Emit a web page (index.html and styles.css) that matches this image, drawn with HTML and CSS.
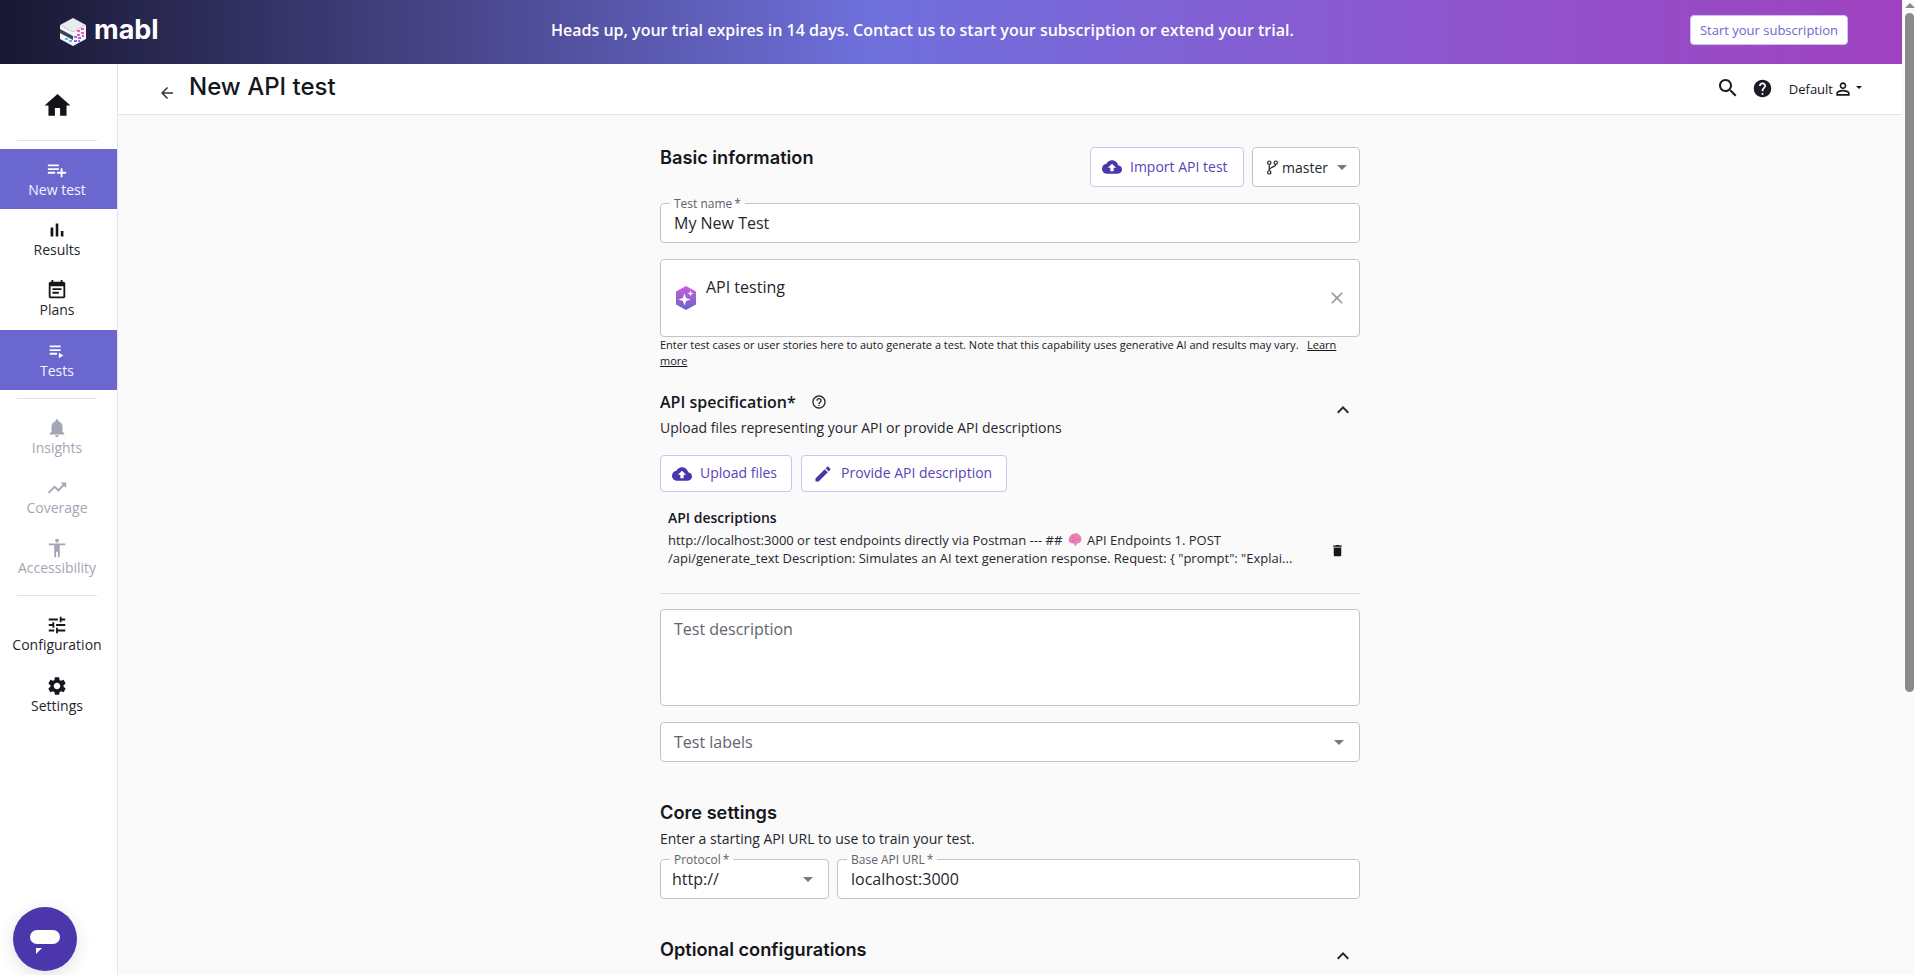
FILE: index.html
```html
<!DOCTYPE html>
<html lang="en">
<head>
  <meta charset="UTF-8" />
  <meta name="viewport" content="width=device-width, initial-scale=1.0"/>
  <title>New API test - mabl</title>
  <link rel="stylesheet" href="styles.css">
</head>
<body>

  <!-- material icons used more than once -->
  <svg class="sprite" aria-hidden="true">
    <symbol id="i-upload" viewBox="0 0 24 24"><path d="M19.35 10.04C18.67 6.59 15.64 4 12 4 9.11 4 6.6 5.64 5.35 8.04 2.34 8.36 0 10.91 0 14c0 3.31 2.69 6 6 6h13c2.76 0 5-2.24 5-5 0-2.64-2.05-4.78-4.65-4.96zM14 13v4h-4v-4H7l5-5 5 5h-3z"/></symbol>
    <symbol id="i-less" viewBox="0 0 24 24"><path d="M12 8l-6 6 1.41 1.41L12 10.83l4.59 4.58L18 14z"/></symbol>
  </svg>

  <div class="app">
    <div class="window">
      <div class="banner">
        <div class="logo">
          <svg class="cube" viewBox="0 0 26 28">
            <path fill="#e9ebef" d="M13 0l13 7-13 7L0 7z"/>
            <path fill="#f6f6f8" d="M0 7l13 7v14L0 21z"/>
            <path fill="#f6f6f8" d="M26 7l-13 7v14l13-7z"/>
            <path fill="#3d4259" d="M0 11l13 7v4L0 15z"/>
            <path fill="#f25bb5" d="M21 10h3v2h-3zM17 12h3v2h-3zM21 14h3v2h-3zM17 16h3v2h-3z"/>
            <path fill="#b45ce8" d="M14 18h3v2h-3zM18 19h3v2h-3zM22 17h2v2h-2z"/>
            <path fill="#6f7bf0" d="M14 22h3v2h-3zM18 22h2v2h-2z"/>
            <path fill="#4cc3e8" d="M5 20h3v2H5zM9 22h3v2H9z"/>
          </svg>
          <span class="wordmark">mabl</span>
        </div>
        <p class="banner-text">Heads up, your trial expires in 14 days. Contact us to start your subscription or extend your trial.</p>
        <a class="start-btn">Start your subscription</a>
      </div>

      <div class="workspace">
        <nav class="sidebar">
          <a class="home">
            <svg viewBox="0 0 24 24"><path d="M10 20v-6h4v6h5v-8h3L12 3 2 12h3v8z"/></svg>
          </a>
          <hr class="side-rule rule-top">
          <a class="nav-item active">
            <svg viewBox="0 0 24 24"><path d="M14 10H2v2h12v-2zm0-4H2v2h12V6zm4 8v-4h-2v4h-4v2h4v4h2v-4h4v-2h-4zM2 16h8v-2H2v2z"/></svg>
            <span>New test</span>
          </a>
          <a class="nav-item">
            <svg viewBox="0 0 24 24"><path d="M5 9.2h3V19H5zM10.6 5h2.8v14h-2.8zm5.6 8H19v6h-2.8z"/></svg>
            <span>Results</span>
          </a>
          <a class="nav-item">
            <svg viewBox="0 0 24 24"><path d="M17 10H7v2h10v-2zm2-7h-1V1h-2v2H8V1H6v2H5c-1.11 0-1.99.9-1.99 2L3 19c0 1.1.89 2 2 2h14c1.1 0 2-.9 2-2V5c0-1.1-.9-2-2-2zm0 16H5V8h14v11zm-5-5H7v2h7v-2z"/></svg>
            <span>Plans</span>
          </a>
          <a class="nav-item active tests-item">
            <svg viewBox="0 0 24 24"><path d="M4 10h12v2H4zm0-4h12v2H4zm0 8h8v2H4zm10 0v6l5-3z"/></svg>
            <span>Tests</span>
          </a>
          <hr class="side-rule">
          <a class="nav-item muted">
            <svg viewBox="0 0 24 24"><path d="M12 22c1.1 0 2-.9 2-2h-4c0 1.1.9 2 2 2zm6-6v-5c0-3.07-1.63-5.64-4.5-6.32V4c0-.83-.67-1.5-1.5-1.5s-1.5.67-1.5 1.5v.68C7.64 5.36 6 7.92 6 11v5l-2 2v1h16v-1l-2-2z"/></svg>
            <span>Insights</span>
          </a>
          <a class="nav-item muted">
            <svg viewBox="0 0 24 24"><path d="M16 6l2.29 2.29-4.88 4.88-4-4L2 16.59 3.41 18l6-6 4 4 6.3-6.29L22 12V6z"/></svg>
            <span>Coverage</span>
          </a>
          <a class="nav-item muted">
            <svg viewBox="0 0 24 24"><path d="M12 2c1.1 0 2 .9 2 2s-.9 2-2 2-2-.9-2-2 .9-2 2-2zm9 7h-6v13h-2v-6h-2v6H9V9H3V7h18v2z"/></svg>
            <span>Accessibility</span>
          </a>
          <hr class="side-rule">
          <a class="nav-item">
            <svg viewBox="0 0 24 24"><path d="M3 17v2h6v-2H3zM3 5v2h10V5H3zm10 16v-2h8v-2h-8v-2h-2v6h2zM7 9v2H3v2h4v2h2V9H7zm14 4v-2H11v2h10zm-6-4h2V7h4V5h-4V3h-2v6z"/></svg>
            <span>Configuration</span>
          </a>
          <a class="nav-item settings-item">
            <svg viewBox="0 0 24 24"><path d="M19.14 12.94c.04-.3.06-.61.06-.94 0-.32-.02-.64-.07-.94l2.03-1.58c.18-.14.23-.41.12-.61l-1.92-3.32c-.12-.22-.37-.29-.59-.22l-2.39.96c-.5-.38-1.03-.7-1.62-.94l-.36-2.54c-.04-.24-.24-.41-.48-.41h-3.84c-.24 0-.43.17-.47.41l-.36 2.54c-.59.24-1.13.57-1.62.94l-2.39-.96c-.22-.08-.47 0-.59.22L2.74 8.87c-.12.21-.08.47.12.61l2.03 1.58c-.05.3-.09.63-.09.94s.02.64.07.94l-2.03 1.58c-.18.14-.23.41-.12.61l1.92 3.32c.12.22.37.29.59.22l2.39-.96c.5.38 1.03.7 1.62.94l.36 2.54c.05.24.24.41.48.41h3.84c.24 0 .44-.17.47-.41l.36-2.54c.59-.24 1.13-.56 1.62-.94l2.39.96c.22.08.47 0 .59-.22l1.92-3.32c.12-.22.07-.47-.12-.61l-2.01-1.58zM12 15.6c-1.98 0-3.6-1.62-3.6-3.6s1.62-3.6 3.6-3.6 3.6 1.62 3.6 3.6-1.62 3.6-3.6 3.6z"/></svg>
            <span>Settings</span>
          </a>
        </nav>

        <main class="main">
          <header class="topbar">
            <svg class="back" viewBox="0 0 24 24"><path d="M20 11H7.83l5.59-5.59L12 4l-8 8 8 8 1.41-1.41L7.83 13H20v-2z"/></svg>
            <h1>New API test</h1>
            <div class="topbar-right">
              <svg class="search" viewBox="0 0 24 24"><path d="M15.5 14h-.79l-.28-.27C15.41 12.59 16 11.11 16 9.5 16 5.91 13.09 3 9.5 3S3 5.91 3 9.5 5.91 16 9.5 16c1.61 0 3.09-.59 4.23-1.57l.27.28v.79l5 4.99L20.49 19l-4.99-5zm-6 0C7.01 14 5 11.99 5 9.5S7.01 5 9.5 5 14 7.01 14 9.5 11.99 14 9.5 14z"/></svg>
              <svg class="help" viewBox="0 0 24 24"><path d="M12 2C6.48 2 2 6.48 2 12s4.48 10 10 10 10-4.48 10-10S17.52 2 12 2zm1 17h-2v-2h2v2zm2.07-7.75l-.9.92C13.45 12.9 13 13.5 13 15h-2v-.5c0-1.1.45-2.1 1.17-2.83l1.24-1.26c.37-.36.59-.86.59-1.41 0-1.1-.9-2-2-2s-2 .9-2 2H8c0-2.21 1.79-4 4-4s4 1.79 4 4c0 .88-.36 1.68-.93 2.25z"/></svg>
              <div class="workspace-menu">
                <span>Default</span>
                <svg class="person" viewBox="0 0 24 24"><path d="M12 5.9c1.16 0 2.1.94 2.1 2.1s-.94 2.1-2.1 2.1S9.9 9.16 9.9 8s.94-2.1 2.1-2.1m0 9c2.97 0 6.1 1.46 6.1 2.1v1.1H5.9V17c0-.64 3.13-2.1 6.1-2.1M12 4C9.79 4 8 5.79 8 8s1.79 4 4 4 4-1.79 4-4-1.79-4-4-4zm0 9c-2.67 0-8 1.34-8 4v3h16v-3c0-2.66-5.33-4-8-4z"/></svg>
                <i class="caret small"></i>
              </div>
            </div>
          </header>

          <form class="form">
            <div class="title-row">
              <h2>Basic information</h2>
              <div class="title-actions">
                <button type="button" class="btn import-btn"><svg><use href="#i-upload"/></svg>Import API test</button>
                <button type="button" class="branch-btn">
                  <svg viewBox="0 0 16 20" fill="none" stroke="currentColor" stroke-width="1.5"><circle cx="4" cy="4" r="2"/><circle cx="4" cy="16" r="2"/><circle cx="12" cy="4" r="2"/><path d="M4 6v8M12 6c0 4-8 3-8 7"/></svg>
                  master<i class="caret"></i>
                </button>
              </div>
            </div>

            <div class="field name-field">
              <label>Test name&#8201;*</label>
              <input type="text" value="My New Test">
            </div>

            <div class="ai-box">
              <svg class="ai-icon" viewBox="0 0 22 24">
                <defs><linearGradient id="aiGrad" x1="0" y1="0" x2="0" y2="1"><stop offset="0" stop-color="#c95fd8"/><stop offset="1" stop-color="#6d62cf"/></linearGradient></defs>
                <path fill="url(#aiGrad)" d="M11 0l10 5.5v13L11 24 1 18.500v-13z"/>
                <path fill="#fff" d="M9.500 7.500l1.600 4.400 4.400 1.600-4.400 1.600-1.600 4.400-1.600-4.400-4.400-1.600 4.400-1.600zM15.500 4.500l.8 2.200 2.200.8-2.200.8-.8 2.200-.8-2.200-2.200-.8 2.200-.8z"/>
              </svg>
              <span class="ai-text">API testing</span>
              <svg class="ai-close" viewBox="0 0 24 24"><path d="M19 6.410L17.590 5 12 10.590 6.410 5 5 6.410 10.590 12 5 17.590 6.410 19 12 13.410 17.590 19 19 17.590 13.410 12z"/></svg>
            </div>
            <p class="hint">Enter test cases or user stories here to auto generate a test. Note that this capability uses generative AI and results may vary. &nbsp; <a>Learn</a> <a>more</a></p>

            <div class="spec-head">
              <div>
                <h3>API specification* <svg class="spec-help" viewBox="0 0 24 24"><path d="M11 18h2v-2h-2v2zm1-16C6.480 2 2 6.480 2 12s4.480 10 10 10 10-4.480 10-10S17.520 2 12 2zm0 18c-4.410 0-8-3.590-8-8s3.590-8 8-8 8 3.590 8 8-3.590 8-8 8zm0-14c-2.210 0-4 1.790-4 4h2c0-1.100.9-2 2-2s2 .9 2 2c0 2-3 1.750-3 5h2c0-2.250 3-2.500 3-5 0-2.210-1.790-4-4-4z"/></svg></h3>
                <p class="sub">Upload files representing your API or provide API descriptions</p>
              </div>
              <svg class="chevron spec-chevron"><use href="#i-less"/></svg>
            </div>

            <div class="spec-actions">
              <button type="button" class="btn"><svg><use href="#i-upload"/></svg>Upload files</button>
              <button type="button" class="btn"><svg viewBox="0 0 24 24"><path d="M3 17.250V21h3.750L17.810 9.940l-3.750-3.750L3 17.250zM20.710 7.040c.39-.39.39-1.020 0-1.410l-2.340-2.340c-.39-.39-1.020-.39-1.410 0l-1.830 1.830 3.750 3.750 1.830-1.830z"/></svg>Provide API description</button>
            </div>

            <div class="desc-row">
              <div class="desc-body">
                <h4>API descriptions</h4>
                <p>http://localhost:3000 or test endpoints directly via Postman --- ## <svg class="brain" viewBox="0 0 14 14"><path fill="#ec7fb2" d="M5 1c2-1 5-1 6.500 1 1.500 1 2.500 3.500 1.800 5.500-.6 2-2.300 3-4.300 3-.3 1.300-1.300 2.500-2.300 2.500-.3-1-.2-2-.5-2.500C3.700 10.500 1.500 10 .8 8 0 5.500 2.500 1.500 5 1z"/><path fill="none" stroke="#c9548f" stroke-width=".7" d="M4 4c1 1 2 1 3 0M8 6c1 1 2 1 3 0M4 8c1 0 2 0 3-1"/></svg> API Endpoints 1. POST<br>/api/generate_text Description: Simulates an AI text generation response. Request: { "prompt": "Explai...</p>
              </div>
              <svg class="trash" viewBox="0 0 24 24"><path d="M6 19c0 1.100.9 2 2 2h8c1.100 0 2-.9 2-2V7H6v12zM19 4h-3.500l-1-1h-5l-1 1H5v2h14V4z"/></svg>
            </div>
            <hr class="divider">

            <textarea class="description" placeholder="Test description"></textarea>

            <div class="select-box labels-box">
              <span>Test labels</span><i class="caret"></i>
            </div>

            <h2 class="core-title">Core settings</h2>
            <p class="sub core-sub">Enter a starting API URL to use to train your test.</p>
            <div class="url-row">
              <div class="field protocol-field">
                <label>Protocol&#8201;*</label>
                <div class="select-box protocol-box"><span>http://</span><i class="caret"></i></div>
              </div>
              <div class="field url-field">
                <label>Base API URL&#8201;*</label>
                <input type="text" value="localhost:3000">
              </div>
            </div>

            <div class="optional-head">
              <h2>Optional configurations</h2>
              <svg class="chevron"><use href="#i-less"/></svg>
            </div>
          </form>
        </main>
      </div>
    </div>

    <div class="scrollbar">
      <i class="scroll-arrow"></i>
      <div class="scroll-thumb"></div>
    </div>
  </div>

  <button type="button" class="chat-btn">
    <i class="chat-pill"></i>
    <i class="chat-tail"></i>
  </button>

</body>
</html>
```

FILE: styles.css
```css
* {
  box-sizing: border-box;
}
html, body {
  height: 100%;
}
body {
  margin: 0;
  font-family: "Open Sans", Arial, sans-serif;
  color: #16171d;
  background: #fafafa;
  overflow: hidden;
}
.sprite {
  position: absolute;
  width: 0;
  height: 0;
}
h1, h2, h3, h4, p {
  margin: 0;
}
.app {
  display: flex;
  height: 975px;
  overflow: hidden;
}
.window {
  flex: 1;
  min-width: 0;
}

/* scrollbar */
.scrollbar {
  width: 13px;
  padding: 3px 1px 0 3px;
}
.scroll-arrow {
  display: block;
  width: 0;
  margin: 0 auto 5px;
  border-left: 5px solid transparent;
  border-right: 5px solid transparent;
  border-bottom: 5px solid #8a8a8a;
}
.scroll-thumb {
  height: 679px;
  background: #8a8a8a;
  border-radius: 5px;
}

/* trial banner */
.banner {
  display: flex;
  align-items: center;
  height: 64px;
  padding: 0 54px 4px 60px;
  background: linear-gradient(90deg, #171731 0%, #43407f 21%, #6f70dc 46%, #8c57cf 74%, #a042bf 100%);
  color: #fff;
}
.logo {
  display: flex;
  align-items: center;
  gap: 8px;
  width: 491px;
}
.cube {
  width: 26px;
  height: 28px;
  margin-top: 4px;
}
.wordmark {
  font-family: Inter, sans-serif;
  font-size: 27px;
  font-weight: 700;
  line-height: 1;
  margin-top: -2px;
}
.banner-text {
  width: 760px;
  font-size: 16px;
  font-weight: 600;
  white-space: nowrap;
}
.start-btn {
  margin-left: auto;
  width: 158px;
  height: 30px;
  line-height: 28px;
  text-align: center;
  background: #fff;
  color: #6d67d0;
  border: 1px solid #c9c7ef;
  border-radius: 4px;
  font-size: 13px;
}

.workspace {
  display: flex;
  height: 911px;
}

/* left nav */
.sidebar {
  flex: none;
  width: 118px;
  background: #fff;
  border-right: 1px solid #e4e4e6;
}
.home {
  display: flex;
  justify-content: center;
  align-items: center;
  height: 76px;
  padding: 7px 3px 0 0;
}
.home svg {
  width: 31px;
  height: 31px;
  fill: #131318;
}
.side-rule {
  width: 80px;
  height: 1px;
  margin: 8px 0 8px 17px;
  border: 0;
  background: #e2e2e5;
}
.rule-top {
  margin-top: 0;
}
.nav-item {
  display: flex;
  flex-direction: column;
  align-items: center;
  height: 60px;
  padding: 10px 3px 0 0;
  font-size: 14px;
  line-height: 20px;
  color: #26272e;
}
.nav-item svg {
  width: 22px;
  height: 22px;
  fill: #16171d;
}
.nav-item span {
  margin-top: -1px;
}
.nav-item.active {
  background: #6a67cf;
  color: #f5f4ff;
}
.nav-item.active svg {
  fill: #fff;
}
.nav-item.muted {
  color: #a2a7b3;
}
.nav-item.muted svg {
  fill: #a2a7b3;
}
.tests-item {
  margin-top: 1px;
}
.settings-item {
  margin-top: 1px;
}

/* page header */
.main {
  flex: 1;
  min-width: 0;
}
.topbar {
  display: flex;
  align-items: center;
  height: 51px;
  padding: 0 40px;
  background: #fff;
  border-bottom: 1px solid #e4e4e6;
}
.back {
  width: 18px;
  height: 18px;
  margin: 8px 13px 0 0;
  fill: #33363f;
}
h1 {
  font-family: Inter, sans-serif;
  font-size: 24px;
  font-weight: 500;
  line-height: 30px;
  margin-top: -4px;
  color: #16171d;
}
.topbar-right {
  display: flex;
  align-items: center;
  margin-left: auto;
  margin-top: -3px;
}
.search {
  width: 24px;
  height: 24px;
  fill: #1c1d24;
}
.help {
  width: 21px;
  height: 21px;
  margin: 1px 0 0 12px;
  fill: #1c1d24;
}
.workspace-menu {
  display: flex;
  align-items: center;
  margin: 2px 0 0 16px;
  font-size: 13px;
}
.person {
  width: 20px;
  height: 20px;
  fill: #16171d;
}
.caret {
  display: block;
  width: 0;
  border-left: 5px solid transparent;
  border-right: 5px solid transparent;
  border-top: 5px solid #77797f;
}
.caret.small {
  margin-left: 3px;
  margin-top: -3px;
  border-left-width: 3px;
  border-right-width: 3px;
  border-top: 3px solid #16171d;
}

/* form column */
.form {
  width: 700px;
  margin: 0 auto;
  padding-top: 32px;
}
.title-row {
  display: flex;
  justify-content: space-between;
  align-items: flex-start;
  height: 40px;
}
h2 {
  font-family: Inter, sans-serif;
  font-size: 18.2px;
  font-weight: 600;
  line-height: 24px;
  color: #16171d;
}
.title-row h2 {
  margin-top: -2px;
}
.title-actions {
  display: flex;
  gap: 8px;
}
.btn {
  display: inline-flex;
  align-items: center;
  gap: 8px;
  height: 37px;
  padding: 0 14px 2px 11px;
  background: #fff;
  border: 1px solid #c9c6ee;
  border-radius: 4px;
  color: #5b42b8;
  font: 14px "Open Sans", Arial, sans-serif;
  white-space: nowrap;
}
.btn svg {
  width: 20px;
  height: 20px;
  margin-top: 2px;
  fill: #4b36ab;
}
.import-btn {
  width: 154px;
  height: 40px;
}
.branch-btn {
  display: flex;
  align-items: center;
  width: 108px;
  height: 40px;
  padding: 0 0 0 13px;
  background: #fff;
  border: 1px solid #c4c4c8;
  border-radius: 4px;
  color: #26272e;
  font: 14px "Open Sans", Arial, sans-serif;
}
.branch-btn svg {
  width: 13px;
  height: 17px;
  margin-right: 3px;
}
.branch-btn .caret {
  margin-left: 9px;
}

.field {
  position: relative;
}
.field label {
  position: absolute;
  top: -6px;
  left: 10px;
  padding: 0 4px;
  font-size: 12px;
  line-height: 14px;
  color: #5f6168;
  background: linear-gradient(#fafafa 45%, #fff 45%);
}
.field input {
  display: block;
  width: 100%;
  height: 40px;
  padding: 0 13px;
  background: #fff;
  border: 1px solid #c4c4c8;
  border-radius: 4px;
  font: 16px "Open Sans", Arial, sans-serif;
  color: #26272e;
}
.name-field {
  margin-top: 16px;
}

.ai-box {
  position: relative;
  display: flex;
  align-items: center;
  height: 78px;
  margin-top: 16px;
  padding: 0 12px 0 14px;
  background: #fff;
  border: 1px solid #c4c4c8;
  border-radius: 4px;
}
.ai-icon {
  width: 22px;
  height: 24px;
  margin-right: 9px;
}
.ai-text {
  font-size: 16px;
  line-height: 22px;
  margin-top: -22px;
  color: #26272e;
}
.ai-close {
  width: 20px;
  height: 20px;
  margin-left: auto;
  fill: #9a9a9e;
}
.hint {
  font-size: 11px;
  line-height: 16px;
  color: #16171d;
}
.hint a {
  text-decoration: underline;
}

.spec-head {
  display: flex;
  justify-content: space-between;
  margin-top: 22px;
}
h3 {
  display: flex;
  align-items: center;
  font-size: 16px;
  font-weight: 600;
  line-height: 22px;
  color: #16171d;
}
.spec-help {
  width: 16px;
  height: 16px;
  margin-left: 15px;
  fill: #26272e;
}
.sub {
  font-size: 14px;
  line-height: 20px;
  color: #26272e;
}
.spec-head .sub {
  margin-top: 5px;
}
.chevron {
  width: 24px;
  height: 24px;
  margin-right: 5px;
  fill: #26272e;
}
.spec-chevron {
  margin-top: 7px;
}
.spec-actions {
  display: flex;
  gap: 9px;
  margin-top: 17px;
}
.desc-row {
  display: flex;
  align-items: center;
  justify-content: space-between;
  padding: 16px 15px 0 8px;
}
h4 {
  font-size: 14px;
  font-weight: 600;
  line-height: 20px;
}
.desc-body p {
  margin-top: 3px;
  font-size: 13px;
  line-height: 18px;
  white-space: nowrap;
  color: #26272e;
}
.brain {
  width: 14px;
  height: 14px;
  vertical-align: -2px;
  margin: 0 2px;
}
.trash {
  width: 15px;
  height: 15px;
  margin-top: 25px;
  fill: #16171d;
}
.divider {
  height: 1px;
  margin: 26px 0 0;
  border: 0;
  background: #dedee0;
}
.description {
  display: block;
  width: 100%;
  height: 97px;
  margin-top: 15px;
  padding: 8px 13px;
  resize: none;
  background: #fff;
  border: 1px solid #c4c4c8;
  border-radius: 4px;
  font: 16px "Open Sans", Arial, sans-serif;
}
.description::placeholder {
  color: #62646b;
  opacity: 1;
}
.select-box {
  display: flex;
  align-items: center;
  justify-content: space-between;
  height: 40px;
  background: #fff;
  border: 1px solid #c4c4c8;
  border-radius: 4px;
  font-size: 16px;
  color: #26272e;
}
.labels-box {
  margin-top: 16px;
  padding: 0 15px 0 13px;
  color: #62646b;
}
.core-title {
  margin-top: 38px;
}
.core-sub {
  margin-top: 5px;
}
.url-row {
  display: flex;
  gap: 8px;
  margin-top: 10px;
}
.protocol-field {
  flex: none;
  width: 169px;
}
.protocol-box {
  padding: 0 15px 0 11px;
}
.url-field {
  flex: 1;
}
.optional-head {
  display: flex;
  justify-content: space-between;
  margin-top: 38px;
}
.optional-head .chevron {
  margin-top: 7px;
}

/* chat launcher */
.chat-btn {
  position: fixed;
  left: 13px;
  top: 907px;
  width: 64px;
  height: 64px;
  padding: 0;
  border: 0;
  border-radius: 50%;
  background: #4b36ab;
  box-shadow: 0 4px 16px rgba(60, 70, 90, 0.16);
}
.chat-pill {
  position: absolute;
  left: 17px;
  top: 23px;
  width: 30px;
  height: 14px;
  border-radius: 7px;
  background: #fff;
}
.chat-tail {
  position: absolute;
  left: 23px;
  top: 41px;
  border-top: 6px solid #fff;
  border-right: 6px solid transparent;
}
```
